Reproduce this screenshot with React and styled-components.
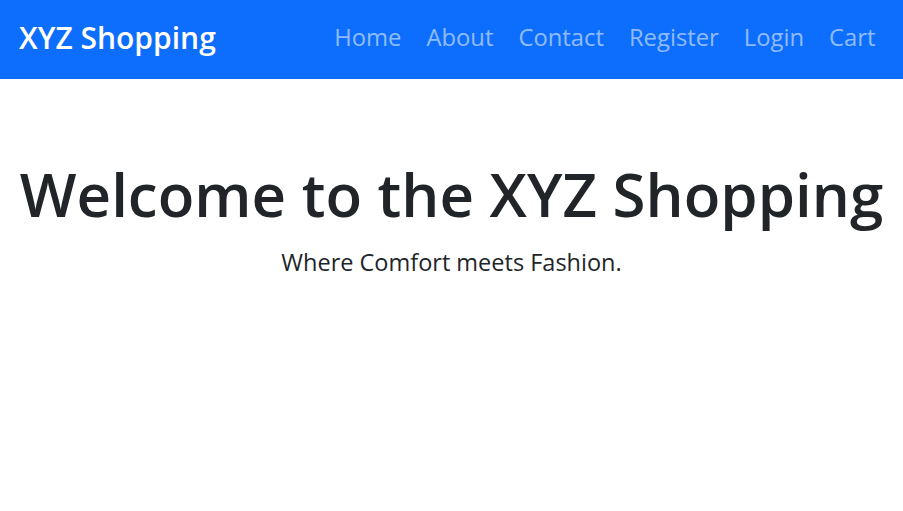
import React from "react";
import styled, { createGlobalStyle } from "styled-components";

const GlobalStyle = createGlobalStyle`
    * {
        box-sizing: border-box;
    }
    body {
        margin: 0;
        background: #fff;
        font-family: "Open Sans", "Noto Sans", sans-serif;
        color: #212529;
    }
`;

const links = ["Home", "About", "Contact", "Register", "Login", "Cart"];

function App() {
    return (
        <>
            <GlobalStyle />
            <Navbar>
                <Brand href="#">XYZ Shopping</Brand>
                <NavList>
                    {links.map((link) => (
                        <NavItem key={link}>
                            <NavLink href="#">{link}</NavLink>
                        </NavItem>
                    ))}
                </NavList>
            </Navbar>
            <Hero>
                <Title>Welcome to the XYZ Shopping</Title>
                <Subtitle>Where Comfort meets Fashion.</Subtitle>
            </Hero>
        </>
    );
}

export default App;

const Navbar = styled.nav`
    display: flex;
    align-items: center;
    justify-content: space-between;
    height: 79px;
    padding: 0 15px 5px 19px;
    background: #0d6efd;
`;

const Brand = styled.a`
    color: #fff;
    font-size: 30px;
    font-weight: 600;
    text-decoration: none;
    white-space: nowrap;
`;

const NavList = styled.ul`
    display: flex;
    list-style: none;
    margin: 0;
    padding: 0;
`;

const NavItem = styled.li`
    display: block;
`;

const NavLink = styled.a`
    display: block;
    padding: 8px 12.5px;
    color: rgba(255, 255, 255, 0.55);
    font-size: 23.8px;
    text-decoration: none;
`;

const Hero = styled.main`
    display: flex;
    flex-direction: column;
    align-items: center;
    padding-top: 79px;
`;

const Title = styled.h1`
    margin: 0;
    font-size: 60px;
    font-weight: 600;
    line-height: 1.2;
    white-space: nowrap;
`;

const Subtitle = styled.p`
    margin: 15px 0 0;
    font-size: 23.5px;
    line-height: 1.5;
`;
